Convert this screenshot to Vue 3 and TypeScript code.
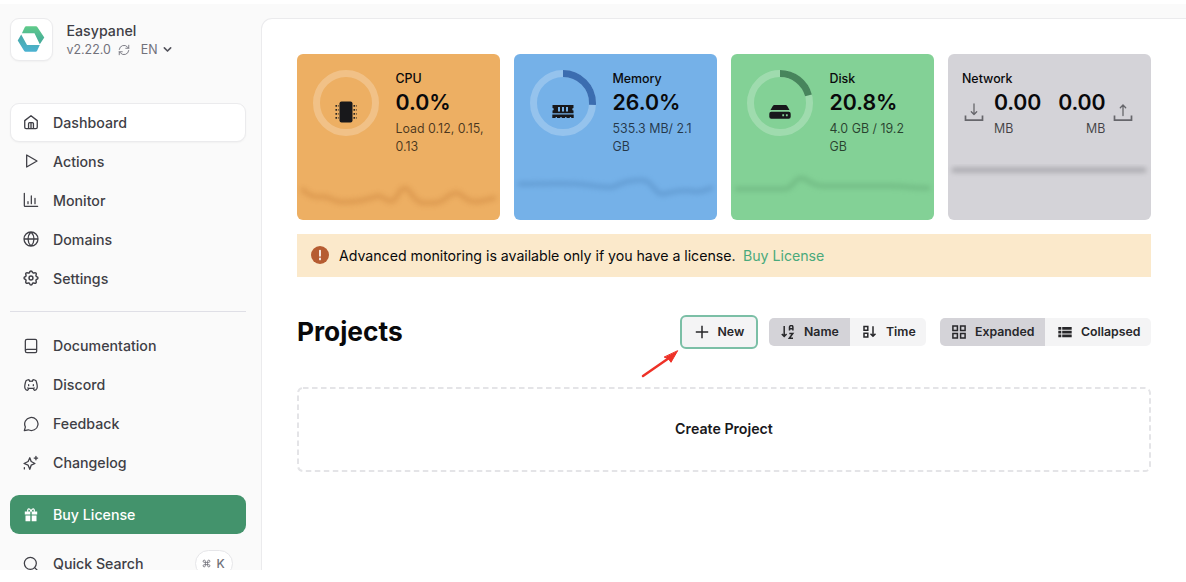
<script setup lang="ts">
interface NavItem { label: string; icon: string; active?: boolean; box?: string }
interface Metric {
  key: string
  label: string
  value: string
  detail: string
  percent: number
  arc: string
  line: string
  stroke: string
}

const mainNav: NavItem[] = [
  { label: 'Dashboard', active: true, box: '0.5 0.5 23 23', icon: 'M3 10 12 3l9 7V19.500a2 2 0 0 1-2 2H5a2 2 0 0 1-2-2zM8.500 21.500V14.500a1.500 1.500 0 0 1 1.500-1.500h4a1.500 1.500 0 0 1 1.500 1.500V21.500M12 13v8' },
  { label: 'Actions', icon: 'M5.500 3v18L21 12z' },
  { label: 'Monitor', icon: 'M2 2v18.500a1 1 0 0 0 1 1h19M7.500 17.500v-3M12.500 17.500V6M18 17.500V9.500' },
  { label: 'Domains', icon: 'M12 1.500a10.500 10.500 0 1 0 0 21 10.500 10.500 0 0 0 0-21M12 1.500c-6 6-6 15 0 21M12 1.500c6 6 6 15 0 21M1.500 12h21' },
  { label: 'Settings', box: '1.700 1.700 20.600 20.600', icon: 'M10.300 4.300c.4-1.750 2.900-1.750 3.400 0a1.700 1.700 0 0 0 2.500 1.100c1.600-.9 3.300.8 2.400 2.400a1.700 1.700 0 0 0 1 2.500c1.800.4 1.800 2.900 0 3.400a1.700 1.700 0 0 0-1 2.500c.9 1.600-.8 3.300-2.400 2.400a1.700 1.700 0 0 0-2.500 1c-.4 1.800-2.900 1.800-3.400 0a1.700 1.700 0 0 0-2.500-1c-1.600.9-3.300-.8-2.400-2.400a1.700 1.700 0 0 0-1-2.500c-1.800-.4-1.800-2.900 0-3.400a1.700 1.700 0 0 0 1-2.500c-.9-1.600.8-3.300 2.400-2.400 1 .6 2.300.1 2.500-1.100zM12 9.500a2.500 2.500 0 1 0 0 5 2.500 2.500 0 0 0 0-5' },
]
const moreNav: NavItem[] = [
  { label: 'Documentation', icon: 'M3.500 19.500V4.500A2.500 2.500 0 0 1 6 2h12.500a2 2 0 0 1 2 2v16a2 2 0 0 1-2 2H6a2.500 2.500 0 0 1 0-5h14.500' },
  { label: 'Discord', icon: 'M8.500 11.500v1.500M15.500 11.500v1.500M15.500 17c0 1 1.500 3 2 3 1.500 0 3-1.700 3.500-3 .6-1.700.5-5.800-1.500-11.500-1.400-1-3-1.300-4.500-1.500l-1 2.500a10 10 0 0 0-4 0L9 4c-1.500.2-3.100.5-4.500 1.500C2.500 11.200 2.400 15.300 3 17c.5 1.300 2 3 3.500 3 .5 0 2-2 2-3M7 16.500c3.500 1 6.500 1 10 0' },
  { label: 'Feedback', icon: 'M2 22l1.600-5.600A10 9.800 0 1 1 8 20.700L2 22' },
  { label: 'Changelog', box: '.5 0 23.500 23.500', icon: 'M10.500 4l2 5.500 5.500 3-5.500 2.500-2 6-2.500-6-6-2.500 6-3zM19.500 2v5M17 4.500h5M2.500 18.500v2' },
]

const metrics: Metric[] = [
  { key: 'cpu', label: 'CPU', value: '0.0%', detail: 'Load 0.12, 0.15, 0.13', percent: 0, arc: '#b56f26', stroke: '#c47a35',
    line: 'M6 26 C12 32 17 33 23 33 C31 31 36 38 46 38 C60 38 68 36 81 32 C88 33 90 38 95 37 C101 35 102 24 108 24 C113 24 116 38 126 39 C147 40 148 34 153 31 C159 27 162 29 168 34 C177 41 188 36 197 34' },
  { key: 'memory', label: 'Memory', value: '26.0%', detail: '535.3 MB/ 2.1 GB', percent: 26, arc: '#3b6db0', stroke: '#4a7fb5',
    line: 'M6 20 C25 20 48 19 64 20 C77 21 88 24 99 23 C109 18 116 16 126 16 C139 15 139 30 149 30 C160 28 168 25 178 27 C186 29 192 26 197 24' },
  { key: 'disk', label: 'Disk', value: '20.8%', detail: '4.0 GB / 19.2 GB', percent: 20.8, arc: '#47855c', stroke: '#5a9c6c',
    line: 'M6 25 H53 C63 25 62 14 71 14 C77 15 80 22 92 22 H160 C173 22 181 24 197 24' },
]
const circumference = 2 * Math.PI * 29.5
const dash = (p: number): string => `${(p / 100) * circumference} ${circumference}`
</script>

<template>
  <div class="page">
    <div class="shell">
      <aside class="sidebar">
        <header class="brand">
          <div class="logo">
            <svg width="28" height="28" viewBox="0 0 28 28">
              <defs>
                <linearGradient id="brand-fade" x1="0" y1="0" x2="0" y2="1">
                  <stop offset="0" stop-color="#48a9a4" /><stop offset="1" stop-color="#4cb2d2" />
                </linearGradient>
                <linearGradient id="brand-top" x1="0" y1="0" x2="0" y2="1">
                  <stop offset="0" stop-color="#60cb89" /><stop offset="1" stop-color="#42a79d" />
                </linearGradient>
              </defs>
              <path d="M9.200 1.200h9.800a1.500 1.500 0 0 1 1.300.8L27.300 12.500l-4.500 6.800L17.500 8.300H4.900L7.900 2a1.500 1.500 0 0 1 1.300-.8" fill="url(#brand-top)" />
              <path d="M4.200 9.600 10 20h12.800L20 26a1.500 1.500 0 0 1-1.300.8H8.500a1.500 1.500 0 0 1-1.300-.8L.7 15.500z" fill="url(#brand-fade)" />
            </svg>
          </div>
          <div class="brand-text">
            <div class="brand-name">Easypanel</div>
            <div class="brand-meta">
              <span>v2.22.0</span>
              <svg class="refresh" viewBox="0 0 24 24"><path d="M21.500 2.500v6h-6M2.500 21.500v-6h6M2.500 11a9.500 9.500 0 0 1 16.500-5L21.500 8.500M21.500 13a9.500 9.500 0 0 1-16.500 5L2.500 15.500" /></svg>
              <span class="lang">EN</span>
              <svg class="chevron" viewBox="0 0 10 10"><path d="m1.500 3.200 3.500 3.500 3.500-3.500" /></svg>
            </div>
          </div>
        </header>

        <nav class="nav">
          <a v-for="item in mainNav" :key="item.label" class="nav-item" :class="{ active: item.active }">
            <svg class="nav-icon" :viewBox="item.box ?? '0 0 24 24'"><path :d="item.icon" /></svg>
            <span>{{ item.label }}</span>
          </a>
        </nav>
        <hr class="rule" />
        <nav class="nav">
          <a v-for="item in moreNav" :key="item.label" class="nav-item">
            <svg class="nav-icon" :viewBox="item.box ?? '0 0 24 24'"><path :d="item.icon" /></svg>
            <span>{{ item.label }}</span>
          </a>
        </nav>
        <a class="nav-item license">
          <svg class="gift" viewBox="0 0 14 14"><path d="M.8 3.500h5.500v3H.8zM7.700 3.500h5.500v3H7.700zM1.500 7.500h4.800v5.700H1.500zM7.700 7.500h4.800v5.700H7.700z" /><path class="bow" d="M7 3.500C6-.2 3.300.1 3.700 3.300M7 3.500C8-.2 10.700.1 10.300 3.300" /></svg>
          <span>Buy License</span>
        </a>
        <a class="nav-item search">
          <svg class="nav-icon" viewBox="0 0 24 24"><circle cx="11" cy="11" r="9" /><path d="m17.500 17.500 5 5" /></svg>
          <span>Quick Search</span>
          <kbd class="shortcut"><svg viewBox="0 0 24 24"><path d="M9 9V6a3 3 0 1 0-3 3h12a3 3 0 1 0-3-3v12a3 3 0 1 0 3-3H6a3 3 0 1 0 3 3z" /></svg>K</kbd>
        </a>
      </aside>

      <main class="content">
        <section class="metrics">
          <article v-for="m in metrics" :key="m.key" class="card" :class="m.key">
            <div class="gauge">
              <svg class="ring" viewBox="0 0 66 66">
                <circle class="track" cx="33" cy="33" r="29.500" />
                <circle v-if="m.percent" class="arc" cx="33" cy="33" r="29.500" :stroke="m.arc" :stroke-dasharray="dash(m.percent)" transform="rotate(-90 33 33)" />
              </svg>
              <svg class="glyph" viewBox="0 0 22 22">
                <template v-if="m.key === 'cpu'">
                  <rect x="4.500" y=".5" width="13" height="21" rx="2" />
                  <path class="pins" d="M.5 4.800h3M.5 8.800h3M.5 12.800h3M.5 16.800h3M18.500 4.800h3M18.500 8.800h3M18.500 12.800h3M18.500 16.800h3" />
                </template>
                <path v-else-if="m.key === 'memory'" fill-rule="evenodd" d="M.5 4h21v3a1.200 1.200 0 0 0 0 2.500v2.800H.5V9.500A1.200 1.200 0 0 0 .5 7zM6 6v4.500h2V6zM10 6v4.500h2V6zM14 6v4.500h2V6zM.3 13.500h21.400V17h-2.500v-1h-1.400v1h-3.300v-1h-1.400v1H9.700v-1H8.300v1H5v-1H3.600v1H.3z" />
                <path v-else fill-rule="evenodd" d="M5.500 4h11a2 2 0 0 1 1.700.9l2.300 4H1.500l2.300-4A2 2 0 0 1 5.500 4M2.300 10.700h17.400a2 2 0 0 1 2 2v3a2 2 0 0 1-2 2H2.300a2 2 0 0 1-2-2v-3a2 2 0 0 1 2-2M13.300 13.200v2h1.800v-2zM16.900 13.200v2h1.800v-2z" />
              </svg>
            </div>
            <div class="figures">
              <div class="label">{{ m.label }}</div>
              <div class="value">{{ m.value }}</div>
              <div class="detail">{{ m.detail }}</div>
            </div>
            <svg class="spark" viewBox="0 0 203 56"><path :d="m.line" :stroke="m.stroke" /></svg>
          </article>

          <article class="card network">
            <div class="label">Network</div>
            <div class="traffic">
              <svg class="transfer" viewBox="0 0 20 20"><path class="tray" d="M1.500 12.500v4.700h17v-4.700" /><path d="M10 1v10.500M7.300 8.700 10 11.500l2.700-2.800" /></svg>
              <div class="amount"><div class="value">0.00</div><div class="detail">MB</div></div>
              <div class="amount sent"><div class="value">0.00</div><div class="detail">MB</div></div>
              <svg class="transfer" viewBox="0 0 20 20"><path class="tray" d="M1.500 12.500v4.700h17v-4.700" /><path d="M10 12.500V2M7.300 4.800 10 2l2.700 2.800" /></svg>
            </div>
            <svg class="spark" viewBox="0 0 203 56"><path d="M6 6h190v.01" stroke="#77777c" /></svg>
          </article>
        </section>

        <div class="notice">
          <span class="alert"><svg viewBox="0 0 18 18"><path d="M9 4.500v5.300M9 12.300v1.200" /></svg></span>
          <span>Advanced monitoring is available only if you have a license.</span>
          <a class="buy">Buy License</a>
        </div>

        <div class="toolbar">
          <h1>Projects</h1>
          <button class="btn new"><svg viewBox="0 0 14 14"><path d="M7 .8v12.400M.8 7h12.400" /></svg>New
          </button>
          <div class="group sort">
            <button class="btn on"><svg viewBox="0 0 14 14"><path d="M3.200 1v10.500M.8 9l2.400 2.500L5.600 9M8.500 5.500V2.200a1.700 1.700 0 0 1 3.400 0v3.300M8.500 3.800h3.400M8.300 8.500h3.500l-3.500 4.700h3.700" /></svg>Name</button>
            <button class="btn"><svg viewBox="0 0 14 14"><path d="M1 1.500h3.800v3.700H1zM1 8.300h3.800V12H1zM10 1.200v10M7.500 8.800 10 11.300l2.500-2.500" /></svg>Time</button>
          </div>
          <div class="group view">
            <button class="btn on"><svg viewBox="0 0 14 14"><path d="M.9.9h4.500v4.500H.9zM8.600.9h4.500v4.500H8.600zM.9 8.600h4.500v4.500H.9zM8.600 8.600h4.500v4.500H8.600z" /></svg>Expanded</button>
            <button class="btn"><svg class="solid" viewBox="0 0 14 14"><path d="M.3 2h3v2.800h-3zM4.200 2h9.500v2.800H4.200zM.3 5.700h3v2.800h-3zM4.200 5.700h9.500v2.800H4.200zM.3 9.400h3v2.800h-3zM4.200 9.400h9.500v2.800H4.200z" /></svg>Collapsed</button>
          </div>
          <svg class="pointer" viewBox="0 0 38 28"><path d="M2 26 28 8" /><path class="head" d="M36.500 1 30 12.300l-2.600-3.600-3.900-1.500z" /></svg>
        </div>

        <div class="empty">
          <svg class="outline"><rect x="1" y="1" width="852" height="83" rx="5" /></svg>
          Create Project
        </div>
      </main>
    </div>
  </div>
</template>

<style>
body { margin: 0; background: #fff; }
</style>

<style scoped>
* { box-sizing: border-box; }
svg { display: block; flex: none; fill: none; stroke-linecap: round; stroke-linejoin: round; }
.page { height: 582px; padding: 4px 0 12px; background: #fff; font-family: Inter, "Liberation Sans", sans-serif; color: #09090b; overflow: hidden; }
.shell { height: 566px; display: flex; background: #fafafa; overflow: hidden; }
.sidebar { width: 261px; flex: none; padding: 14px 15px 0 10px; color: #3f3f46; }
.brand { display: flex; gap: 14px; height: 43px; }
.logo { width: 42.500px; height: 42.500px; display: grid; place-items: center; background: #fff; border: 1px solid #ebebed; border-radius: 9px; box-shadow: 0 1px 2px #0000000a; }
.brand-text { padding-top: 3px; }
.brand-name { font-size: 14.200px; line-height: 19px; font-weight: 500; }
.brand-meta { display: flex; align-items: center; font-size: 12.400px; line-height: 19px; color: #71717a; }
.refresh { width: 12px; height: 12px; margin-left: 7px; stroke: #71717a; stroke-width: 1.800; }
.lang { margin-left: 11px; }
.chevron { width: 9px; height: 9px; margin-left: 5px; stroke: #52525b; stroke-width: 1.800; }
.nav { display: flex; flex-direction: column; }
.brand + .nav { margin-top: 41.500px; }
.nav-item { height: 39px; padding-left: 12px; display: flex; align-items: center; gap: 14px; border: 1px solid transparent; border-radius: 9px; font-size: 14.200px; font-weight: 500; }
.nav-icon { width: 16px; height: 16px; stroke: #3f3f46; stroke-width: 1.900; }
.active { background: #fff; border-color: #ebebed; box-shadow: 0 1px 2px #0000000a; }
.rule { height: 1px; margin: 13.500px 0 14px; border: 0; background: #dfdfe6; }
.license { margin-top: 13px; color: #fff; background: #43936c; }
.gift { width: 14px; height: 14px; margin: 0 1px; fill: #fff; }
.bow { fill: none; stroke: #fff; stroke-width: 1.200; }
.search { margin-top: 10px; }
.shortcut { width: 38px; height: 27px; margin-left: auto; margin-right: 12.500px; display: flex; align-items: center; justify-content: center; gap: 5px; background: #fff; border: 1px solid #e6e6e9; border-radius: 14px; color: #71717a; font: 500 12px Inter, sans-serif; }
.shortcut svg { width: 9px; height: 9px; stroke: #71717a; stroke-width: 2.300; }
.content { flex: 1; min-width: 0; margin-top: 14px; padding: 35px 35px 0; background: #fff; border: 1px solid #ebebed; border-right: 0; border-bottom: 0; border-top-left-radius: 11px; }
.metrics { width: 854px; display: grid; grid-template-columns: repeat(4, 203px); gap: 14px; }
.card { position: relative; height: 166px; padding: 16px 14px 0 16px; display: flex; align-items: flex-start; gap: 16.500px; border-radius: 6px; overflow: hidden; }
.cpu { background: #edaf63; }
.memory { background: #75b1e8; }
.disk { background: #83d196; }
.gauge { display: grid; place-items: center; width: 66px; height: 66px; }
.gauge > svg { grid-area: 1 / 1; }
.ring { width: 66px; height: 66px; }
.ring circle { stroke-width: 7; stroke-linecap: butt; }
.track { stroke: #ffffff3b; }
.glyph { width: 22px; height: 22px; margin-top: 18px; fill: #18181b; }
.pins { stroke: #18181b; stroke-width: 1.800; stroke-dasharray: 1.400 1; stroke-linecap: butt; }
.figures { flex: 1; min-width: 0; }
.label { padding-top: 1px; font-size: 12.400px; line-height: 16px; font-weight: 500; }
.value { font-size: 21.300px; line-height: 31px; font-weight: 600; }
.detail { margin-top: 2px; font-size: 12.400px; line-height: 18.300px; color: #000000b0; }
.spark { position: absolute; left: 0; bottom: 0; width: 203px; height: 56px; }
.spark path { stroke-width: 5; opacity: .36; filter: blur(2.800px); }
.network { display: block; padding-left: 14px; background: #d4d3d8; }
.network .spark path { opacity: .45; }
.network .value { letter-spacing: -.15px; }
.traffic { display: flex; }
.amount { margin-left: 10px; }
.sent { margin-left: 17px; margin-right: 7px; text-align: right; }
.transfer { width: 20px; height: 20px; margin: 16px 1px 0 2px; stroke: #66666b; stroke-width: 1.300; }
.transfer + .amount { margin-left: 9px; }
.sent + .transfer { margin-left: 1px; }
.tray { stroke-width: 1.700; stroke-linecap: butt; stroke-linejoin: miter; }
.notice { width: 854px; height: 42.500px; margin-top: 14px; padding-left: 14px; display: flex; align-items: center; background: #fbe9cb; font-size: 14.200px; letter-spacing: -.035px; }
.alert { width: 18px; height: 18px; margin-right: 10px; border-radius: 50%; background: #b65c31; }
.alert svg { stroke: #fff; stroke-width: 1.700; }
.buy { margin-left: 7.500px; color: #4aa97c; }
.toolbar { position: relative; width: 854px; height: 33px; margin-top: 38.500px; display: flex; align-items: center; }
h1 { margin: 0 auto 0 0; font-size: 26.300px; line-height: 33px; font-weight: 700; }
.btn { height: 28px; padding: 0 11.500px; display: flex; align-items: center; gap: 9.500px; border: 0; background: #f4f4f5; color: #27272a; font: 600 12.300px Inter, sans-serif; white-space: nowrap; }
.btn svg { width: 14px; height: 14px; stroke: #27272a; stroke-width: 1.500; stroke-linejoin: miter; stroke-linecap: butt; }
.btn .solid { fill: #27272a; stroke: none; }
.new { width: 78px; height: 34px; padding: 0 13px; gap: 8.500px; border: 2px solid #7bbfa6; border-radius: 6px; }
.group { display: flex; height: 28px; border-radius: 5px; overflow: hidden; }
.sort { width: 157px; margin-left: 11px; }
.view { width: 211px; margin-left: 14px; }
.sort .btn:first-child { width: 81px; }
.sort .btn:last-child { width: 76px; padding-left: 12.500px; }
.view .btn:first-child { width: 105px; }
.view .btn:last-child { width: 106px; padding-left: 12.500px; }
.on { background: #d4d3d8; }
.pointer { position: absolute; left: 344px; top: 35px; width: 38px; height: 28px; stroke: #ee3127; stroke-width: 2.500; }
.head { fill: #ee3127; stroke-width: 1; }
.empty { position: relative; width: 854px; height: 85px; padding-bottom: 2px; margin-top: 39px; display: grid; place-items: center; font-size: 14.200px; font-weight: 600; color: #18181b; }
.outline { position: absolute; inset: 0; width: 854px; height: 85px; stroke: #e4e4e7; stroke-width: 2; stroke-dasharray: 5.500 3.500; stroke-linecap: butt; }
</style>
